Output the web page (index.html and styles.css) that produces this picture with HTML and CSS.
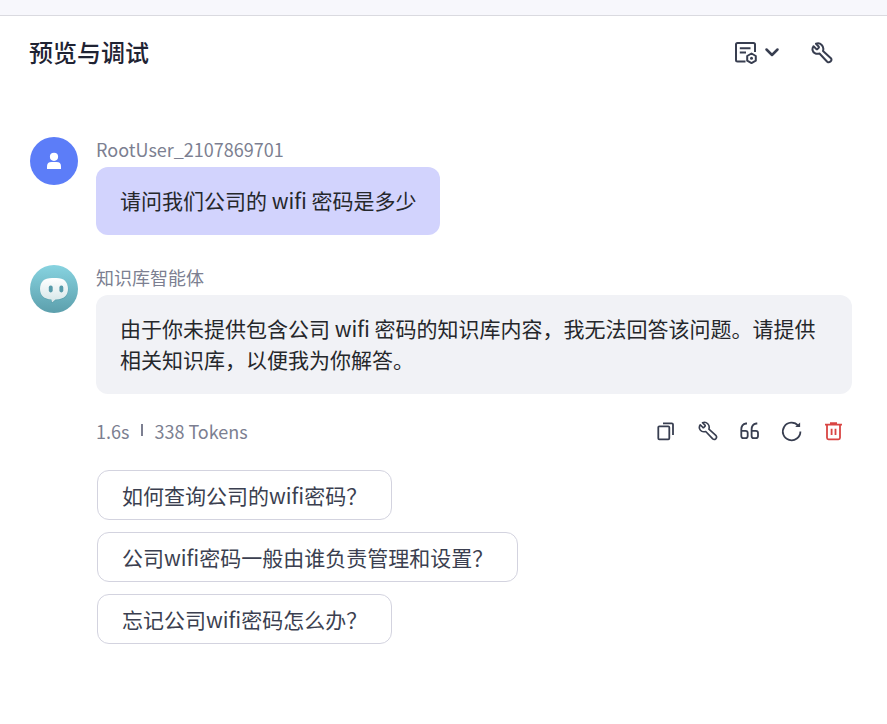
FILE: index.html
```
<!DOCTYPE html>
<html lang="zh-CN">
<head>
<meta charset="utf-8">
<title>预览与调试</title>
<link rel="stylesheet" href="styles.css">
</head>
<body>
<svg class="defs" width="0" height="0">
  <symbol id="wrench" viewBox="0 0 22 22">
    <path d="M5 1.8 L7.6 4.5 Q8.2 5.2 7.6 5.9 L6.6 6.9 Q5.9 7.5 5.2 6.9 L2.5 4.2 C.6 7 1.5 9.7 3.8 11.1 C5.5 12.1 7.2 11.9 8.5 11.5 L16.2 19.7 Q17.8 21 19.5 19.6 Q21.2 17.8 19.9 16.2 L12 9 C12.8 6.4 12.1 4.4 10.7 3 C9.2 1.5 7 1 5 1.8 Z"/>
  </symbol>
</svg>
<div class="topbar"></div>
<header class="header">
  <h1>预览与调试</h1>
  <div class="tools">
    <svg class="icon doc" viewBox="0 0 23 22"><path d="M10.5 19.5H2.5Q1 19.5 1 18V2.5Q1 1 2.5 1H18.5Q20 1 20 2.5V10M4.8 6.2H15.5M4.8 10.6H11"/><path d="M16.5 11.5L20.8 14V18.7L16.5 21.1L12.2 18.7V14Z"/><circle class="dot" cx="16.5" cy="16.3" r="1.5"/></svg>
    <svg class="icon chevron" viewBox="0 0 14 9"><path d="M1.5 1.5L7 7L12.5 1.5"/></svg>
    <svg class="icon tool"><use href="#wrench"/></svg>
  </div>
</header>
<main class="chat">
  <section class="message">
    <svg class="avatar" viewBox="0 0 48 48"><circle cx="24" cy="24" r="24" fill="#5c7df8"/><circle cx="24" cy="19.8" r="4.1" fill="#fff"/><path d="M17 32V29.3Q17 25 21.5 25H26.5Q31 25 31 29.3V32Z" fill="#fff"/></svg>
    <div class="body">
      <div class="name">RootUser_2107869701</div>
      <div class="bubble user">请问我们公司的 wifi 密码是多少</div>
    </div>
  </section>
  <section class="message">
    <svg class="avatar" viewBox="0 0 48 48">
      <defs>
        <linearGradient id="sea" x2="0" y2="1"><stop stop-color="#87d3e0"/><stop offset="1" stop-color="#5c9fac"/></linearGradient>
        <linearGradient id="face" x2="0" y2="1"><stop stop-color="#fff"/><stop offset="1" stop-color="#d5e6e8"/></linearGradient>
      </defs>
      <circle cx="24" cy="24" r="24" fill="url(#sea)"/>
      <path d="M22 13.5H26.5C34 13.5 38.4 17.5 38.4 24.3C38.4 31 34 35 26.5 35.2H25.5L22.5 37.9Q21.7 38.4 21.6 37.2L21.2 35C14 35 9.8 31 9.8 24.3C9.8 17.5 14 13.5 22 13.5Z" fill="#337d8c" opacity=".3"/>
      <path d="M22 13H26.5C34 13 38 17 38 23.8C38 30.3 34 34.3 26.5 34.5H25.5L22.7 37Q21.9 37.5 21.8 36.3L21.4 34.5C14 34.3 10 30.3 10 23.8C10 17 14 13 22 13Z" fill="url(#face)"/>
      <rect x="18.8" y="20.6" width="3.9" height="6.8" rx="1.8" fill="#579baa"/><rect x="29.4" y="20.6" width="3.9" height="6.8" rx="1.8" fill="#579baa"/>
    </svg>
    <div class="body">
      <div class="name">知识库智能体</div>
      <div class="bubble">由于你未提供包含公司 wifi 密码的知识库内容，我无法回答该问题。请提供相关知识库，以便我为你解答。</div>
      <div class="meta">
        <span>1.6s</span><i class="divider"></i><span>338 Tokens</span>
        <div class="actions">
          <svg class="icon" viewBox="0 0 20 20"><rect x="2.3" y="5.3" width="11" height="13" rx="1"/><path d="M7 2.3H15.8Q17 2.3 17 3.5V14"/></svg>
          <svg class="icon"><use href="#wrench"/></svg>
          <svg class="icon" viewBox="0 0 20 20"><path d="M7 2.5H6Q1.3 3.3 1.3 8.5V15Q1.3 17.2 3.5 17.2H5.5Q7.7 17.2 7.7 15V12Q7.7 9.8 5.5 9.8H1.3M17.3 2.5H16.3Q11.6 3.3 11.6 8.5V15Q11.6 17.2 13.8 17.2H15.8Q18 17.2 18 15V12Q18 9.8 15.8 9.8H11.6"/></svg>
          <svg class="icon" viewBox="0 0 20 20"><path d="M18.4 10.5A8.8 8.8 0 1 1 16.3 4.8"/><path class="fill" d="M18.1 1.5V6.1H13.2Z"/></svg>
          <svg class="icon danger" viewBox="0 0 20 20"><path d="M1 3.6H18M6 2.2H13M3 3.5V16.8Q3 18.3 4.5 18.3H14.5Q16 18.3 16 16.8V3.5M7.6 7.7V14M11.5 7.7V14"/></svg>
        </div>
      </div>
      <div class="suggestions">
        <button>如何查询公司的wifi密码？</button>
        <button>公司wifi密码一般由谁负责管理和设置？</button>
        <button>忘记公司wifi密码怎么办？</button>
      </div>
    </div>
  </section>
</main>
</body>
</html>
```
FILE: styles.css
```
* { box-sizing: border-box; }
body { margin: 0; background: #fff; color: #25272b; font-family: "Noto Sans CJK SC", sans-serif; }
.defs { display: block; }
.topbar { height: 16px; background: #f7f7fc; border-bottom: 1px solid #dadae0; }
.header { height: 73px; padding: 0 54px 0 29px; display: flex; justify-content: space-between; align-items: center; }
h1 { margin: 0; padding-bottom: 2px; font-size: 24px; line-height: 36px; font-weight: 500; color: #1f2333; }
.tools { display: flex; align-items: center; }
.icon { display: block; width: 20px; height: 20px; overflow: visible; fill: none; stroke: #383e50; stroke-width: 1.8; stroke-linejoin: round; }
.doc { width: 23px; height: 22px; stroke-width: 2; }
.chevron { width: 14px; height: 9px; margin: 0 32px 0 7px; stroke-width: 2.5; stroke-linecap: round; }
.tool { width: 22px; height: 22px; stroke-width: 2; }
.dot, .fill { fill: #383e50; stroke: none; }
.danger { stroke: #d94543; }
.chat { padding: 48px 35px 0 30px; display: flex; flex-direction: column; gap: 30px; }
.message { display: flex; gap: 18px; }
.avatar { width: 48px; height: 48px; flex: none; }
.body { flex: 1; min-width: 0; }
.name { height: 30px; font-size: 18px; line-height: 25px; color: #7c7f91; }
.bubble { padding: 18px 24px; border-radius: 12px; background: #f1f2f6; font-size: 21px; line-height: 31.5px; }
.user { width: 344px; padding-right: 20px; background: #d2d3fd; }
.meta { height: 76px; padding-bottom: 2px; display: flex; align-items: center; font-size: 18px; line-height: 26px; color: #7c7f91; }
.divider { width: 2px; height: 12px; margin: 0 11px 2px 12px; background: #7c7f91; }
.actions { margin-left: auto; margin-right: 8px; display: flex; gap: 22px; }
.suggestions { padding-left: 1px; display: flex; flex-direction: column; align-items: flex-start; gap: 12px; }
button { height: 50px; padding: 0 24px; border: 1px solid #d3d3df; border-radius: 12px; background: #fff; color: #3b3f50; font: 21px/30px "Noto Sans CJK SC", sans-serif; }
```
